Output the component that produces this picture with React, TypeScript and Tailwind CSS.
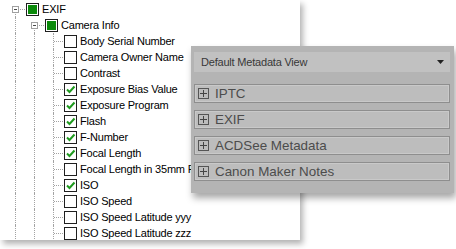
import React from "react";

type CheckState = "off" | "on" | "partial";

type Node = {
  level: number;
  label: string;
  state: CheckState;
  expand?: boolean;
};

const NODES: Node[] = [
  { level: 0, label: "EXIF", state: "partial", expand: true },
  { level: 1, label: "Camera Info", state: "partial", expand: true },
  { level: 2, label: "Body Serial Number", state: "off" },
  { level: 2, label: "Camera Owner Name", state: "off" },
  { level: 2, label: "Contrast", state: "off" },
  { level: 2, label: "Exposure Bias Value", state: "on" },
  { level: 2, label: "Exposure Program", state: "on" },
  { level: 2, label: "Flash", state: "on" },
  { level: 2, label: "F-Number", state: "on" },
  { level: 2, label: "Focal Length", state: "on" },
  { level: 2, label: "Focal Length in 35mm Film", state: "off" },
  { level: 2, label: "ISO", state: "on" },
  { level: 2, label: "ISO Speed", state: "off" },
  { level: 2, label: "ISO Speed Latitude yyy", state: "off" },
  { level: 2, label: "ISO Speed Latitude zzz", state: "off" },
];

const SECTIONS = ["IPTC", "EXIF", "ACDSee Metadata", "Canon Maker Notes"];

// --- tree bits ---
function CheckBox({ state }: { state: CheckState }) {
  return (
    <span className="ml-px flex h-[13px] w-[13px] shrink-0 items-center justify-center border border-[#1f1f1f] bg-white">
      {state === "partial" && <span className="h-[9px] w-[9px] bg-[#0b8a0b]" />}
      {state === "on" && (
        <svg width="11" height="11" viewBox="0 0 11 11">
          <path d="M2 5.5 L4.5 8 L9.5 2.5" fill="none" stroke="#1f9a1f" strokeWidth="2" />
        </svg>
      )}
    </span>
  );
}

function Guide() {
  return (
    <div className="h-full w-[19px] shrink-0">
      <div className="ml-[9px] h-full border-l border-dotted border-[#a3a3a3]" />
    </div>
  );
}

function Connector({ expand }: { expand?: boolean }) {
  return (
    <div className="relative h-full w-[19px] shrink-0">
      {/* vertical: parents start at their box, leaves run through */}
      <span
        className={
          expand
            ? "absolute left-[9px] top-[8px] bottom-0 border-l border-dotted border-[#a3a3a3]"
            : "absolute left-[9px] top-0 bottom-0 border-l border-dotted border-[#a3a3a3]"
        }
      />
      <span className="absolute left-[10px] right-0 top-[8px] border-t border-dotted border-[#a3a3a3]" />
      {expand && (
        <span className="absolute left-[6px] top-[5px] flex h-[7px] w-[7px] items-center justify-center border border-[#a0a0a0] bg-white">
          <span className="h-px w-[3px] bg-[#4a4a4a]" />
        </span>
      )}
    </div>
  );
}

function TreeRow({ node }: { node: Node }) {
  const guides = Array.from({ length: node.level });
  return (
    <div className="flex h-4 items-center pl-[6px]">
      {guides.map((_, i) => (
        <Guide key={i} />
      ))}
      <Connector expand={node.expand} />
      <CheckBox state={node.state} />
      <span className="ml-[3px] whitespace-nowrap text-[11px] leading-none tracking-[-0.2px] text-black">
        {node.label}
      </span>
    </div>
  );
}

// --- metadata panel ---
function PlusBox() {
  return (
    <span className="relative flex h-[11px] w-[11px] shrink-0 items-center justify-center border border-[#555]">
      <span className="absolute h-px w-[7px] bg-[#444]" />
      <span className="absolute h-[7px] w-px bg-[#444]" />
    </span>
  );
}

function SectionRow({ label }: { label: string }) {
  return (
    <div className="flex h-[19px] items-center gap-[6px] border border-[#8e8e8e] bg-[#bdbdbd] pl-[3px] shadow-[inset_0_0_0_1px_#c9c9c9]">
      <PlusBox />
      <span className="text-[13.4px] leading-none text-[#4c4c4c]">{label}</span>
    </div>
  );
}

export default function App() {
  return (
    <div
      className="relative h-[249px] w-[456px] overflow-hidden bg-white"
      style={{ fontFamily: '"Liberation Sans", Arial, sans-serif' }}
    >
      {/* property tree */}
      <div className="h-[240px] w-[300px] overflow-hidden bg-white pt-px shadow-[3px_4px_6px_rgba(0,0,0,0.3)]">
        {NODES.map((n) => (
          <TreeRow key={n.label} node={n} />
        ))}
      </div>

      {/* metadata view panel, floating over the tree */}
      <div className="absolute left-[191px] top-[46px] flex h-[147px] w-[263px] flex-col bg-[#b4b4b4] pb-3 pl-[3px] pr-[4px] pt-[6px] shadow-[2px_5px_7px_rgba(0,0,0,0.35)]">
        <div className="flex h-5 items-center justify-between bg-[#c1c1c1] pl-[7px] pr-[6px]">
          <span className="text-[11px] leading-none tracking-[-0.2px] text-[#383838]">
            Default Metadata View
          </span>
          <svg width="7" height="4" viewBox="0 0 7 4">
            <path d="M0 0 H7 L3.5 4 Z" fill="#222" />
          </svg>
        </div>
        <div className="mt-3 flex flex-col gap-[7px]">
          {SECTIONS.map((s) => (
            <SectionRow key={s} label={s} />
          ))}
        </div>
      </div>
    </div>
  );
}
